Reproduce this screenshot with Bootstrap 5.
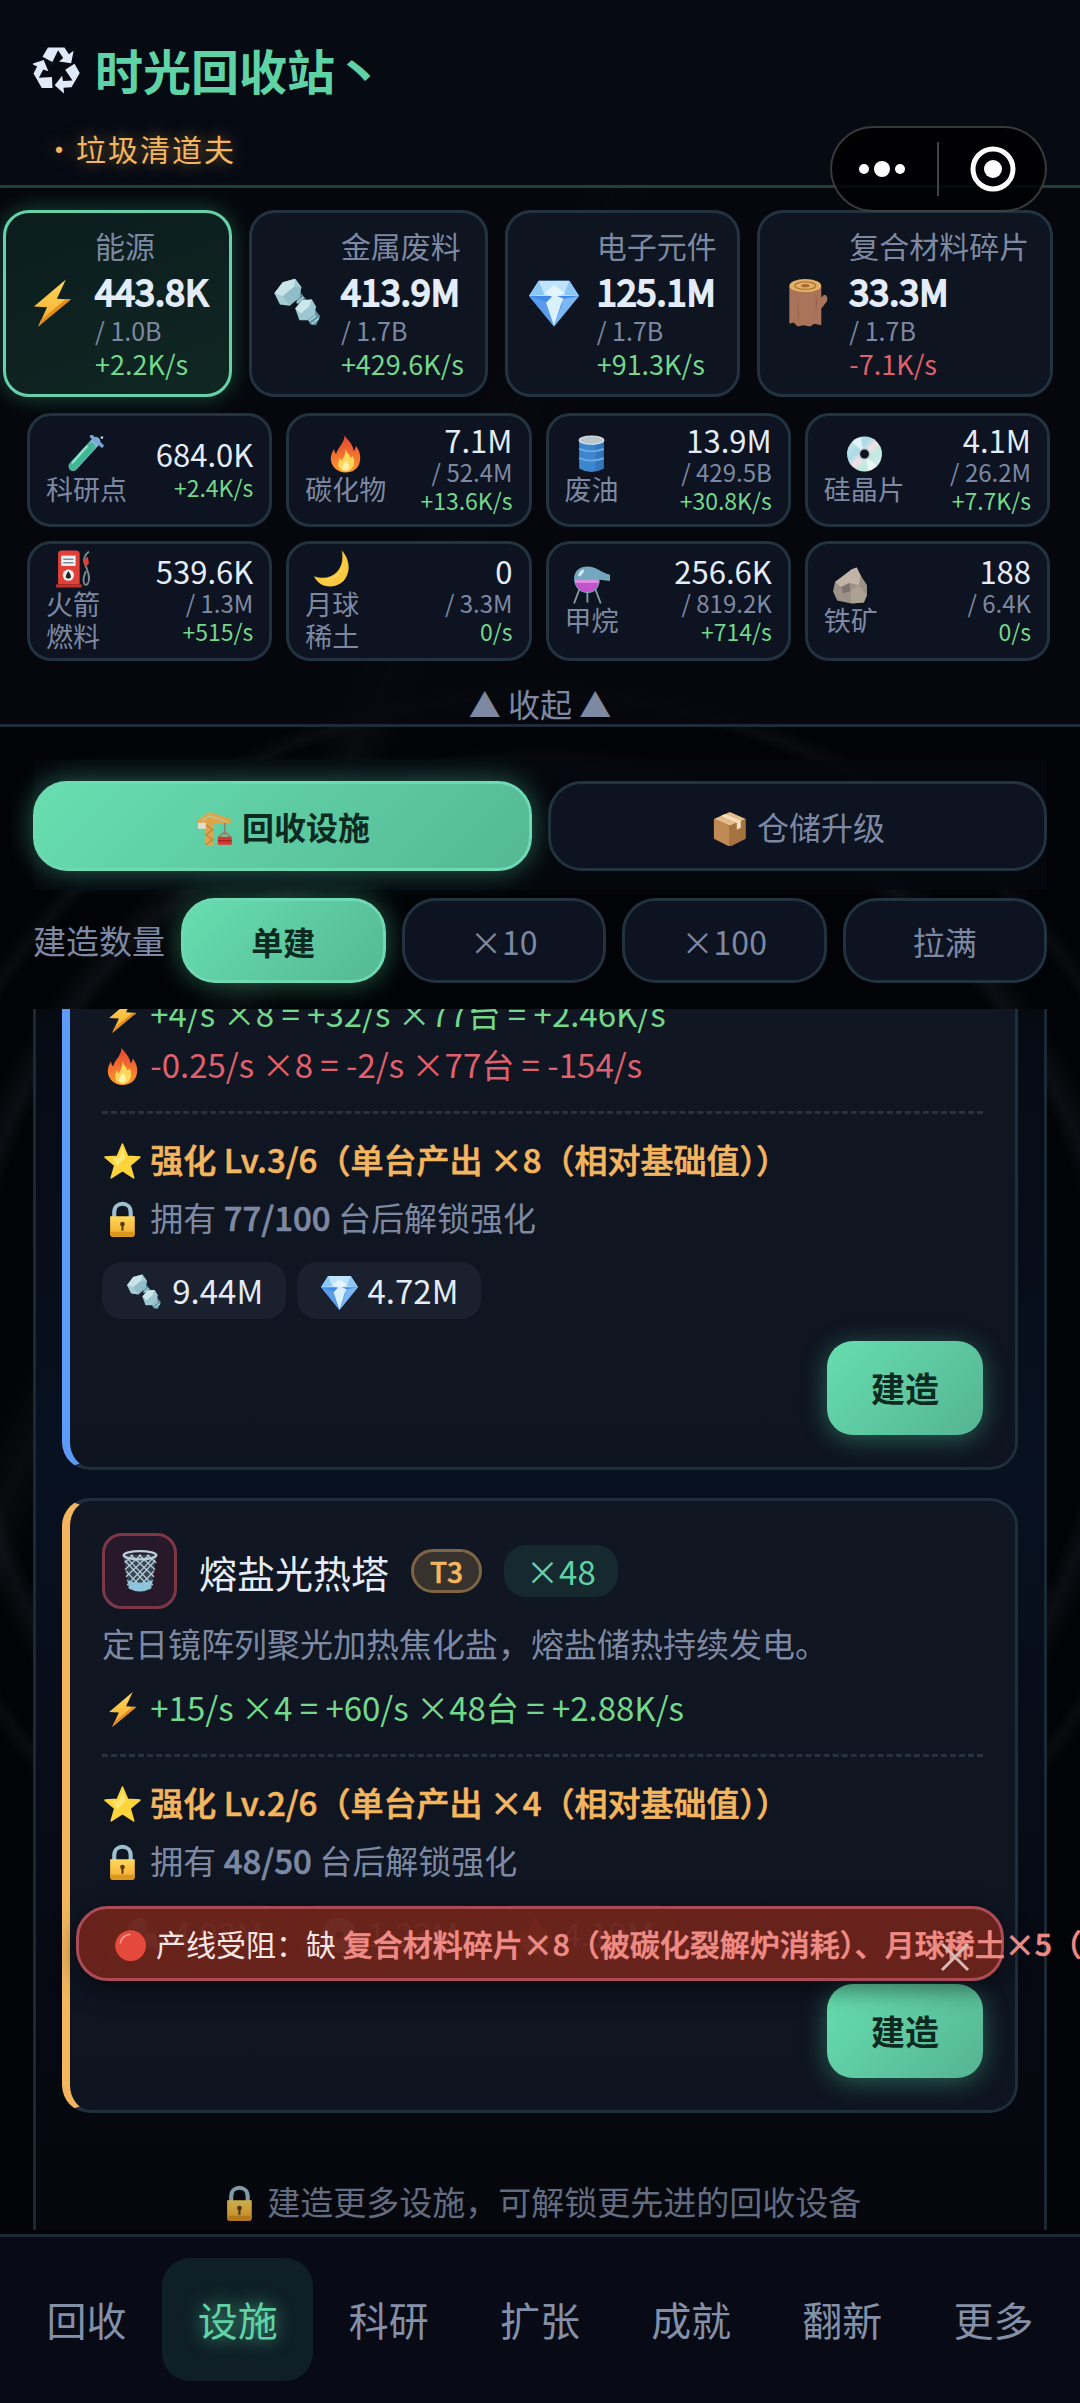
<!DOCTYPE html>
<html lang="zh-CN">
<head>
<meta charset="utf-8">
<meta name="viewport" content="width=device-width, initial-scale=1">
<title>时光回收站</title>
<link href="https://cdn.jsdelivr.net/npm/bootstrap@5.3.0/dist/css/bootstrap.min.css" rel="stylesheet">
<style>
:root{--mint:#5fd3a5;--line:#22323f;--muted:#7d89a3;--ink:#e3ecf8;--gain:#74d88c;--loss:#e0616d;--amber:#f3b65f;--pane:#0e1420}
body{background:#010204;color:var(--ink);font-family:"Noto Sans CJK SC","Noto Sans",sans-serif;font-size:33px;line-height:51px}
.app{overflow:hidden;background:
 radial-gradient(circle at 50% 56%,transparent 560px,rgba(50,55,70,.22) 575px,transparent 600px,transparent 640px,rgba(45,50,60,.18) 650px,transparent 665px),
 linear-gradient(115deg,transparent 30%,rgba(60,60,60,.14) 32%,transparent 34%),#020306}
.emo{width:1.24em;height:1.24em;vertical-align:-.26em;flex:none;padding:.06em}
.heavy{font-weight:500;-webkit-text-stroke:.6px currentColor}
.topbar{background:#060a13;border-bottom:3px solid #1f3f3c;padding:33px 33px 15px}
.game-title{font-size:48px;line-height:72px;font-weight:700;color:var(--mint);gap:15px}
.game-title .emo{width:47px;height:47px;padding:0}
.rank{font-size:30px;line-height:44px;letter-spacing:2px;color:var(--amber);text-shadow:0 0 16px rgba(243,182,95,.5);margin-top:21px;padding-left:11px}
.capsule{top:126px;right:33px;width:217px;height:86px;border:2px solid rgba(255,255,255,.22);border-radius:43px;background:rgba(0,0,0,.82);z-index:5}
.stock{background:rgba(6,9,15,.82);border-bottom:3px solid #1d2c38;padding-top:22px}
.main-res{gap:17px;padding:0 27px 0 3px}
.res-big{flex:1 1 auto;border:3px solid var(--line);border-radius:26px;background:var(--pane);padding:11px 18px 12px 20px;gap:17px;white-space:nowrap}
.res-big .emo{width:52px;height:52px;padding:1px}
.res-big.hot{background:linear-gradient(160deg,#0b1c1d,#102723);border-color:#66d2a9;box-shadow:0 0 22px rgba(70,200,150,.35)}
.r-name{font-size:30px;line-height:42px;color:var(--muted)}
.r-val{font-size:36px;line-height:48px;-webkit-text-stroke:2px currentColor}
.r-cap{font-size:25px;line-height:32px;color:var(--muted)}
.r-rate{font-size:27px;line-height:36px}
.gain{color:var(--gain)}.loss{color:var(--loss)}.dim{color:var(--muted)}
.sub-res{display:grid;grid-template-columns:repeat(4,1fr);gap:14px;padding:16px 30px 0 27px}
.res-small{border:3px solid var(--line);border-radius:24px;background:#0d1320;padding:6px 16px}
.res-small .emo{width:37px;height:38px;padding:0}
.s-nums{padding-bottom:3px}
.s-name{font-size:27px;line-height:32px;color:var(--muted)}
.s-val{font-size:31px;line-height:36px}
.s-cap{font-size:24px;line-height:27px;color:var(--muted)}
.s-rate{font-size:23px;line-height:30px}
.fold{font-size:32px;line-height:42px;color:var(--muted);background:none;border:0;padding:0;margin-top:21px}
.work{padding:33px 33px 0}
.tabs-box{background:rgba(5,8,15,.9);padding:21px 0 19px;gap:16px}
.pill{border:3px solid var(--line);background:#0d1320;color:var(--muted);font-size:32px;line-height:48px;border-radius:34px;padding:18px 0 18px;flex:1 1 0}
.pill.on{background:linear-gradient(135deg,#67deb0,#55b895);border-color:#6fd9b3;color:#0c2a20;font-weight:700;box-shadow:0 0 28px rgba(80,210,160,.45)}
.amount{padding:8px 0 26px;gap:16px}
.amount .pill{padding:16px 0 15px}
.amount-label{color:var(--muted)}
.list-wrap{margin:0 33px 4px;border:solid #1b2935;border-width:0 3px;padding:0 26px;overflow:hidden;background:linear-gradient(#060a13,#081120 38%,#060912 80%,#05070c)}
.unit{border:3px solid #1f2e3b;border-left:8px solid var(--edge);border-radius:28px;background:linear-gradient(#101622,#0e1420);padding:32px;margin-bottom:28px}
.unit.cut{border-top:0;border-radius:0 0 28px 28px;padding-top:0;margin-top:-21px}
.unit-head{height:76px;gap:22px}
.thumb{width:75px;height:76px;border:3px solid #7d3848;border-radius:20px;background:#28192a}
.thumb .emo{width:42px;height:42px;padding:0}
.unit-name{font-size:38px}
.unit-desc{margin:9px 0 13px}
.tier{font-size:28px;line-height:38px;color:var(--amber);border:3px solid #7c6544;background:#38322e;border-radius:23px;padding:0 16px}
.owned{line-height:52px;color:var(--mint);background:#15292f;border-radius:22px;padding:0 22px}
.boost{border-top:3px dashed #28323f;margin-top:21px;padding-top:16px}
.boost-row{line-height:58px}
.star-row{color:var(--amber)}
.chip-line{gap:11px}
.chip{line-height:57px;background:#1a202d;border-radius:20px;padding:0 23px 0 22px}
.build{font-size:34px;font-weight:700;line-height:54px;color:#0c2a20;background:linear-gradient(135deg,#67deb0,#55b493);border:0;border-radius:26px;padding:20px 44px;margin-top:22px;box-shadow:0 4px 26px rgba(80,210,160,.4)}
.more-note{margin-top:63px;padding-bottom:1px;color:#636c80}
.alarm{left:76px;right:76px;bottom:253px;height:75px;border:3px solid #ac4b55;border-radius:32px;background:rgba(107,35,27,.96);font-size:30px;color:#f8e6e4;padding-left:33px;white-space:nowrap;box-shadow:0 8px 24px rgba(0,0,0,.5)}
.alarm b{color:#ee8b85}
.alarm .shut{right:30px;top:32px;width:32px;height:32px;background:none;border:0;padding:0}
.dock{background:#080b15;border-top:3px solid #1d2a34;padding:21px 11px 22px}
.dock a{flex:1 1 0;font-size:40px;line-height:123px;color:#8490a8;text-align:center;text-decoration:none;border-radius:28px}
.dock a.on{color:var(--mint);background:#0e1f25;text-shadow:0 0 18px rgba(95,211,165,.8)}
</style>
</head>
<body>
<svg width="0" height="0" class="position-absolute" aria-hidden="true"><defs>
<linearGradient id="gy" x1="0" y1="0" x2="0" y2="1"><stop offset="0" stop-color="#ffd95a"/><stop offset="1" stop-color="#f4a92c"/></linearGradient>
<linearGradient id="gf" x1="0" y1="0" x2="0" y2="1"><stop offset="0" stop-color="#e5432f"/><stop offset="1" stop-color="#ff9a2e"/></linearGradient>
<linearGradient id="gcd" x1="0" y1="0" x2="1" y2="1"><stop offset="0" stop-color="#cfeaf0"/><stop offset=".35" stop-color="#a9dbe6"/><stop offset=".5" stop-color="#f4dfe4"/><stop offset=".65" stop-color="#bfeadf"/><stop offset="1" stop-color="#dfe9f2"/></linearGradient>
<symbol id="recycle" viewBox="-74 -74 148 148"><g id="arm"><path fill="#dfe9f8" d="M-44-40-27-69H25L39-48 54-59 46-20 8-25 21-36 5-61-13-24z"/></g><use href="#arm" transform="rotate(120)"/><use href="#arm" transform="rotate(240)"/></symbol>
<symbol id="bolt" viewBox="0 0 36 36"><path fill="url(#gy)" d="M28 1 5 20.500 14.500 21 8 35 31.500 15.500 21.500 15z"/><path fill="#e38b1c" d="M31.500 15.500 8 35 10 30.500 28 15.300z"/></symbol>
<symbol id="nut" viewBox="0 0 36 36"><path fill="#5d93a1" d="m15 13 4-3.500 15 18L31 34l-4-.5z"/><path stroke="#a9cfd7" stroke-width="1.200" d="m17 18 5-4M26 31l5-4M28 33l5-4"/><path fill="#a4ccd4" d="M1 11 7 3l9-2.500 4.500 6L19 14l-7 6-7-1z"/><path fill="#c9e4e8" d="M1 11 7 3l9-2.500-1 6-8 6.500z"/><path fill="#83b3bf" d="m15 6.500 5.500 0L19 14l-7 6-5-7z" opacity=".6"/><path fill="#9cc7d0" d="m16 22 5-6 7-.5 3 5-1 6-5 4-6 0z"/><path fill="#cde6ea" d="m16 22 5-6 7-.5-2 5-6 5z"/></symbol>
<symbol id="gem" viewBox="0 0 36 36"><path fill="#3f8be8" d="M0 13 18 35 36 13 29 2H7z"/><path fill="#bfe3fb" d="M7 2h22l7 11H0z"/><path fill="#8cc6f5" d="m0 13 7-11 4 10zM36 13 29 2l-4 10z"/><path fill="#e3f4fe" d="m11 11 7-6 8 6-8 3z"/><path fill="#d9f0fd" d="m12 18 6-6 7 3-2 4-5 16z"/><path fill="#7db7f2" d="m25 15 11-2-18 22z"/><path fill="#5a9bea" d="m0 13 12 4 6 18z"/></symbol>
<symbol id="log" viewBox="0 0 36 36"><path fill="#a9745a" d="M6 6h23v8l2-2c2 0 3 2 2 5l-4 5v12l-5-1-3 2-5-1-4 1-3-3-3 1z"/><path fill="#96634b" d="M12 15v12l1 5 0-6zM25 9v18l1-9z"/><ellipse cx="17.500" cy="5.500" rx="11.500" ry="4.800" fill="#e3b069"/><ellipse cx="17.500" cy="5.500" rx="7.500" ry="2.700" fill="none" stroke="#b27a35"/><ellipse cx="17.500" cy="5.500" rx="3" ry="1.200" fill="#a86b2b"/></symbol>
<symbol id="tube" viewBox="0 0 36 36"><path d="M27 6 5 30" stroke="#7fb7cf" stroke-width="9" stroke-linecap="round"/><path d="M22 11 5 30" stroke="#3fb893" stroke-width="8" stroke-linecap="round"/><path d="M19 10 4 27" stroke="#8fe5cc" stroke-width="2"/><path d="m23 1 10 9" stroke="#7aa5d6" stroke-width="3.500" stroke-linecap="round"/><circle cx="33" cy="2" r="1.300" fill="#a8d8ee"/></symbol>
<symbol id="fire" viewBox="0 0 36 36"><path fill="url(#gf)" d="M17 0c3 4 8 8 9 15 1-1 2-3 2-5 4 5 5 10 4 15-1 7-7 11-14 11S5 31 4 25c-1-5 1-9 3-12 0 3 1 4 2 5 1-6 8-10 8-18z"/><path fill="#ffd65a" d="M18 13c1 4 4 5 5 9l2-2c2 4 2 8 0 11-2 3-4 4-7 4s-7-2-7-7c0-3 1-5 2-6l1 3c2-3 4-6 4-12z"/><path fill="#fff3b0" d="M18 24c3 3 4 5 3 8-1 2-5 3-6 0-1-2 2-4 3-8z"/></symbol>
<symbol id="drum" viewBox="0 0 36 36"><path fill="#3d86cf" d="M6 4h24v28q-12 7-24 0z"/><path fill="#2563a8" d="M22 4h8v28l-8 3z" opacity=".5"/><ellipse cx="18" cy="4.500" rx="12" ry="4" fill="#b9c8cc" stroke="#e1eaec"/><path d="M6 13q12 5 24 0M6 22q12 5 24 0" stroke="#6caae4" stroke-width="1.800" fill="none"/></symbol>
<symbol id="disc" viewBox="0 0 36 36"><circle cx="18" cy="18" r="17" fill="url(#gcd)"/><path fill="#fff" opacity=".6" d="M18 18 6 6a17 17 0 0 1 8-4zM18 18l12 12a17 17 0 0 1-8 4z"/><circle cx="18" cy="18" r="6" fill="#b7cfd5"/><circle cx="18" cy="18" r="4.300" fill="#10151c"/></symbol>
<symbol id="pump" viewBox="0 0 36 36"><path d="M33 1c-5 4-6 9-3 14 2 6 5 12 2 17-3 4-5-1-4-6l2-6" fill="none" stroke="#7d898e" stroke-width="1.800"/><path fill="#e23f36" d="M28 9l4-3 1 7-4 3zM3 3q0-3 4-3h13q4 0 4 3v30H3z"/><path fill="#c4302b" d="M1 33h25v3H1z"/><rect x="6" y="5" width="14" height="10" fill="#eef2f4"/><path stroke="#808b92" stroke-width="1.500" d="M8 8.500h10M8 12h10"/><circle cx="13" cy="24" r="5.500" fill="#eee"/><path d="M13 20q5 7 0 7.500-5-.5 0-7.500z" fill="#222"/></symbol>
<symbol id="moon" viewBox="0 0 36 36"><path fill="#fbc93f" d="M27 0c13 14 6 35-11 35C8 35 3 31 0 25c17 6 31-6 27-25z"/><path fill="#ffe07a" d="M28 3c5 10-3 26-22 26 16 3 28-11 22-26z" opacity=".6"/></symbol>
<symbol id="still" viewBox="0 0 36 36"><path fill="none" stroke="#8799a5" stroke-width="1.800" d="M7 20 1 36M21 20l6 16M14 24v11"/><path fill="#73a7bd" d="M1 12C1 4 7 0 14 0c9 0 13 6 22 8v6l-10-1c0 8-5 13-12 13S1 20 1 12z"/><path fill="#c352cc" d="M2 14h23c-1 7-5 11-11 11S3 21 2 14z"/><path fill="#e08de4" d="M2 13h23v3H2z"/><path fill="#d6ebf3" d="M5 8q2-5 6-5-1 5-5 7z"/></symbol>
<symbol id="rock" viewBox="0 0 36 36"><path fill="#9d9288" d="M19 3 24 1l4 8 6 9v10l-3 7-12 1L5 33 1 24l2-9z"/><path fill="#c0b4a6" d="M19 3 24 1l4 8-2 9-9-2-8 4-6-5z"/><path fill="#7d736c" d="m9 20 8-4 1 8-7 2z"/><path fill="#b4a899" d="m18 24 8-6 8 10-3 7-12 1z" opacity=".7"/></symbol>
<symbol id="crane" viewBox="0 0 36 36"><path fill="#e0a548" d="M8 9h9v27H8z"/><path stroke="#b98545" stroke-width="1.200" fill="none" d="m9 14 7 5-7 5 7 5-7 5"/><path fill="#e0a548" d="M1 9 13 1l21 7v5H1z"/><path stroke="#b9c9a0" stroke-width="1.200" fill="none" d="m5 10 8-5 17 6"/><path fill="#e2ddd0" d="M1 12h8v6H1z"/><path stroke="#9b7a62" stroke-width="1.500" d="M28 12v12m0-3-6 5m6-5 6 5"/><path fill="#d9372f" d="M21 26h14v8H21z"/><path stroke="#8b1d1d" d="M21 30h14"/></symbol>
<symbol id="box" viewBox="0 0 36 36"><path fill="#c08a55" d="M2 8 18 15v21L2 28z"/><path fill="#a5733f" d="M34 8 18 15v21l16-8z"/><path fill="#e5bb85" d="M2 8 18 1l16 7-16 7z"/><path fill="#f3dfc0" d="m9 5 16 7v7l4-2v-7L13 3z"/></symbol>
<symbol id="star" viewBox="0 0 36 36"><path fill="#fdd43c" stroke="#fdd43c" stroke-linejoin="round" stroke-width="1.500" d="m18 1 5 12 12 .8-9.500 8L29 34l-11-7-11 7 3.500-12.200L1 13.800 13 13z"/><path fill="#ffec8a" d="m18 4 3 10-8 9-5-8 7-1z" opacity=".7"/></symbol>
<symbol id="lock" viewBox="0 0 36 36"><path d="M10 18v-7c0-11 16-11 16 0v7" fill="none" stroke="#9ec0cf" stroke-width="4"/><path fill="url(#gy)" d="M6 15h24v17q0 3-3 3H9q-3 0-3-3z"/><path fill="#dc961f" d="M6 30h24v2q0 3-3 3H9q-3 0-3-3z"/><circle cx="18" cy="22.500" r="2.300" fill="#593b12"/><path fill="#593b12" d="M17 23h2v6h-2z"/></symbol>
<symbol id="bin" viewBox="0 0 36 36"><path fill="#394655" d="M4 4h28l-4 29q-10 5-20 0z"/><path d="m5 9 22 24M4 4l25 26M10 4l20 19M17 4l14 13M24 4l8 7M6 18l16 17M7 26l9 9M31 9 9 33M32 4 7 30M26 4 6 23M19 4 5 17M12 4 5 11M30 18 14 35M29 26l-9 9" stroke="#b4cbd6" stroke-width="1.100"/><ellipse cx="18" cy="4.500" rx="14" ry="3.500" fill="none" stroke="#b9d0da" stroke-width="2"/><path fill="#8ec4dc" d="M7.500 26q10 4 21 0l-1 7q-10 5-19 0z"/></symbol>
<symbol id="redball" viewBox="0 0 36 36"><circle cx="18" cy="18" r="16.500" fill="#e5493b"/><path d="M7 15q2-8 10-9" stroke="#f39a8a" stroke-width="2" fill="none" stroke-linecap="round"/></symbol>
</defs></svg>

<div class="app position-relative d-flex flex-column min-vh-100">
  <header class="topbar">
    <h1 class="game-title d-flex align-items-center mb-0"><svg class="emo"><use href="#recycle"/></svg>时光回收站丶</h1>
    <div class="rank">・垃圾清道夫</div>
  </header>
  <div class="capsule position-absolute">
    <svg class="d-block" width="213" height="82" viewBox="0 0 213 82"><g fill="#fff"><circle cx="32" cy="41" r="5"/><circle cx="50" cy="41" r="8"/><circle cx="68" cy="41" r="5"/><circle cx="161" cy="41" r="9"/></g><path d="M106 14v54" stroke="#414346" stroke-width="2"/><circle cx="161" cy="41" r="20" fill="none" stroke="#fff" stroke-width="5"/></svg>
  </div>

  <section class="stock">
    <div class="main-res d-flex">
      <div class="res-big hot d-flex align-items-center"><svg class="emo"><use href="#bolt"/></svg><div><div class="r-name">能源</div><div class="r-val">443.8K</div><div class="r-cap">/ 1.0B</div><div class="r-rate gain">+2.2K/s</div></div></div>
      <div class="res-big d-flex align-items-center"><svg class="emo"><use href="#nut"/></svg><div><div class="r-name">金属废料</div><div class="r-val">413.9M</div><div class="r-cap">/ 1.7B</div><div class="r-rate gain">+429.6K/s</div></div></div>
      <div class="res-big d-flex align-items-center"><svg class="emo"><use href="#gem"/></svg><div><div class="r-name">电子元件</div><div class="r-val">125.1M</div><div class="r-cap">/ 1.7B</div><div class="r-rate gain">+91.3K/s</div></div></div>
      <div class="res-big d-flex align-items-center"><svg class="emo"><use href="#log"/></svg><div><div class="r-name">复合材料碎片</div><div class="r-val">33.3M</div><div class="r-cap">/ 1.7B</div><div class="r-rate loss">-7.1K/s</div></div></div>
    </div>
    <div class="sub-res">
      <div class="res-small d-flex align-items-center justify-content-between"><div class="d-flex flex-column align-items-center"><svg class="emo"><use href="#tube"/></svg><div class="s-name">科研点</div></div><div class="s-nums text-end"><div class="s-val">684.0K</div><div class="s-rate gain">+2.4K/s</div></div></div>
      <div class="res-small d-flex align-items-center justify-content-between"><div class="d-flex flex-column align-items-center"><svg class="emo"><use href="#fire"/></svg><div class="s-name">碳化物</div></div><div class="s-nums text-end"><div class="s-val">7.1M</div><div class="s-cap">/ 52.4M</div><div class="s-rate gain">+13.6K/s</div></div></div>
      <div class="res-small d-flex align-items-center justify-content-between"><div class="d-flex flex-column align-items-center"><svg class="emo"><use href="#drum"/></svg><div class="s-name">废油</div></div><div class="s-nums text-end"><div class="s-val">13.9M</div><div class="s-cap">/ 429.5B</div><div class="s-rate gain">+30.8K/s</div></div></div>
      <div class="res-small d-flex align-items-center justify-content-between"><div class="d-flex flex-column align-items-center"><svg class="emo"><use href="#disc"/></svg><div class="s-name">硅晶片</div></div><div class="s-nums text-end"><div class="s-val">4.1M</div><div class="s-cap">/ 26.2M</div><div class="s-rate gain">+7.7K/s</div></div></div>
      <div class="res-small d-flex align-items-center justify-content-between"><div class="d-flex flex-column align-items-center"><svg class="emo"><use href="#pump"/></svg><div class="s-name">火箭<br>燃料</div></div><div class="s-nums text-end"><div class="s-val">539.6K</div><div class="s-cap">/ 1.3M</div><div class="s-rate gain">+515/s</div></div></div>
      <div class="res-small d-flex align-items-center justify-content-between"><div class="d-flex flex-column align-items-center"><svg class="emo"><use href="#moon"/></svg><div class="s-name">月球<br>稀土</div></div><div class="s-nums text-end"><div class="s-val">0</div><div class="s-cap">/ 3.3M</div><div class="s-rate gain">0/s</div></div></div>
      <div class="res-small d-flex align-items-center justify-content-between"><div class="d-flex flex-column align-items-center"><svg class="emo"><use href="#still"/></svg><div class="s-name">甲烷</div></div><div class="s-nums text-end"><div class="s-val">256.6K</div><div class="s-cap">/ 819.2K</div><div class="s-rate gain">+714/s</div></div></div>
      <div class="res-small d-flex align-items-center justify-content-between"><div class="d-flex flex-column align-items-center"><svg class="emo"><use href="#rock"/></svg><div class="s-name">铁矿</div></div><div class="s-nums text-end"><div class="s-val">188</div><div class="s-cap">/ 6.4K</div><div class="s-rate gain">0/s</div></div></div>
    </div>
    <button class="fold d-block w-100" type="button">▲ 收起 ▲</button>
  </section>

  <section class="work">
    <div class="tabs-box d-flex">
      <button class="pill on" type="button"><svg class="emo"><use href="#crane"/></svg> 回收设施</button>
      <button class="pill" type="button"><svg class="emo"><use href="#box"/></svg> 仓储升级</button>
    </div>
    <div class="amount d-flex align-items-center">
      <span class="amount-label">建造数量</span>
      <button class="pill on" type="button">单建</button>
      <button class="pill" type="button">×10</button>
      <button class="pill" type="button">×100</button>
      <button class="pill" type="button">拉满</button>
    </div>
  </section>

  <main class="list-wrap flex-grow-1">
    <article class="unit cut" style="--edge:#5c9bfa">
      <div class="gain"><svg class="emo"><use href="#bolt"/></svg> +4/s ×8 = +32/s ×77台 = +2.46K/s</div>
      <div class="loss"><svg class="emo"><use href="#fire"/></svg> -0.25/s ×8 = -2/s ×77台 = -154/s</div>
      <div class="boost">
        <div class="boost-row star-row heavy"><svg class="emo"><use href="#star"/></svg> 强化 Lv.3/6（单台产出 ×8（相对基础值））</div>
        <div class="boost-row dim"><svg class="emo"><use href="#lock"/></svg> 拥有 <b class="heavy">77/100</b> 台后解锁强化</div>
        <div class="chip-line d-flex mt-3"><span class="chip"><svg class="emo"><use href="#nut"/></svg> 9.44M</span><span class="chip"><svg class="emo"><use href="#gem"/></svg> 4.72M</span></div>
      </div>
      <div class="d-flex justify-content-end"><button class="build" type="button">建造</button></div>
    </article>
    <article class="unit mb-0" style="--edge:#f3b65f">
      <div class="unit-head d-flex align-items-center">
        <span class="thumb d-flex align-items-center justify-content-center"><svg class="emo"><use href="#bin"/></svg></span>
        <span class="unit-name">熔盐光热塔</span><span class="tier heavy">T3</span><span class="owned">×48</span>
      </div>
      <div class="unit-desc dim">定日镜阵列聚光加热焦化盐，熔盐储热持续发电。</div>
      <div class="gain"><svg class="emo"><use href="#bolt"/></svg> +15/s ×4 = +60/s ×48台 = +2.88K/s</div>
      <div class="boost">
        <div class="boost-row star-row heavy"><svg class="emo"><use href="#star"/></svg> 强化 Lv.2/6（单台产出 ×4（相对基础值））</div>
        <div class="boost-row dim"><svg class="emo"><use href="#lock"/></svg> 拥有 <b class="heavy">48/50</b> 台后解锁强化</div>
        <div class="chip-line d-flex mt-3"><span class="chip"><svg class="emo"><use href="#nut"/></svg> 4.92M</span><span class="chip"><svg class="emo"><use href="#disc"/></svg> 1.23M</span><span class="chip"><svg class="emo"><use href="#fire"/></svg> 4.19M</span></div>
      </div>
      <div class="d-flex justify-content-end"><button class="build" type="button">建造</button></div>
    </article>
    <div class="more-note text-center"><svg class="emo" opacity=".8"><use href="#lock"/></svg> 建造更多设施，可解锁更先进的回收设备</div>
  </main>

  <div class="position-relative">
    <div class="alarm position-absolute d-flex align-items-center" role="alert">
      <div><svg class="emo"><use href="#redball"/></svg> 产线受阻：缺 <b class="heavy">复合材料碎片×8（被碳化裂解炉消耗）、月球稀土×5（</b></div>
      <button class="shut position-absolute" type="button" aria-label="关闭"><svg class="d-block" viewBox="0 0 32 32"><path d="m3 3 26 26M29 3 3 29" stroke="#d9b9b6" stroke-width="3"/></svg></button>
    </div>
  </div>
  <nav class="dock d-flex">
    <a href="#">回收</a><a href="#" class="on">设施</a><a href="#">科研</a><a href="#">扩张</a><a href="#">成就</a><a href="#">翻新</a><a href="#">更多</a>
  </nav>
</div>
<script src="https://cdn.jsdelivr.net/npm/bootstrap@5.3.0/dist/js/bootstrap.bundle.min.js"></script>
</body>
</html>
